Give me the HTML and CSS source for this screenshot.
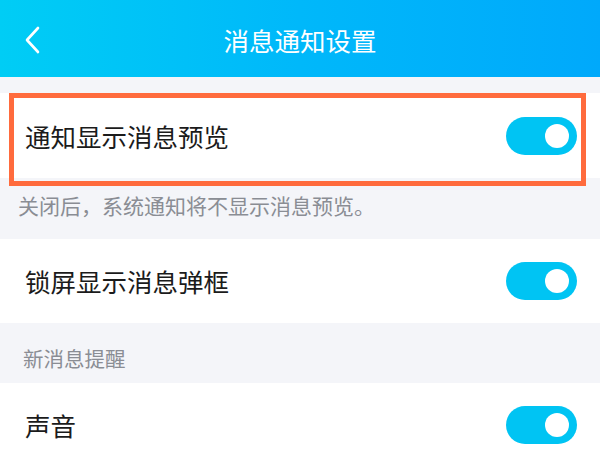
FILE: index.html
```html
<!DOCTYPE html>
<html lang="zh">
<head>
<meta charset="utf-8">
<link rel="stylesheet" href="styles.css">
</head>
<body>
<div class="page">
  <header class="topbar">
    <svg class="back" width="16" height="28" viewBox="0 0 16 28"><path d="M14 2 L3 14 L14 26" fill="none" stroke="#fff" stroke-width="2.6" stroke-linecap="round" stroke-linejoin="round"/></svg>
    <div class="title">消息通知设置</div>
  </header>
  <div class="gap-top"></div>
  <div class="row row-first">
    <span class="label">通知显示消息预览</span>
    <span class="toggle"><span class="knob"></span></span>
    <div class="highlight"></div>
  </div>
  <div class="hint">关闭后，系统通知将不显示消息预览。</div>
  <div class="row">
    <span class="label">锁屏显示消息弹框</span>
    <span class="toggle"><span class="knob"></span></span>
  </div>
  <div class="section">新消息提醒</div>
  <div class="row">
    <span class="label">声音</span>
    <span class="toggle"><span class="knob"></span></span>
  </div>
</div>
</body>
</html>
```
FILE: styles.css
```css
* { box-sizing: border-box; }
html, body { margin: 0; padding: 0; }
body {
  width: 600px;
  height: 450px;
  overflow: hidden;
  background: #f4f5f9;
  font-family: "Noto Sans CJK SC", "Noto Sans", sans-serif;
}
.page { width: 600px; }
.topbar {
  position: relative;
  height: 77px;
  background: linear-gradient(90deg, #00cdf5 0%, #00b8fa 50%, #00a9fb 100%);
  display: flex;
  align-items: center;
  justify-content: center;
}
.back {
  position: absolute;
  left: 24px;
  top: 26px;
}
.title {
  color: #fff;
  font-size: 25.5px;
  line-height: 1;
  margin-top: 2px;
}
.gap-top { height: 16px; }
.row {
  position: relative;
  height: 84px;
  background: #fff;
  display: flex;
  align-items: center;
  justify-content: space-between;
  padding: 0 23px 0 25px;
}
.row-first { height: 85px; }
.label {
  font-size: 25.5px;
  color: #1b1b1b;
  line-height: 1;
}
.toggle {
  width: 71px;
  height: 38px;
  border-radius: 19px;
  background: #00c4f3;
  display: flex;
  align-items: center;
  justify-content: flex-end;
  padding-right: 8px;
}
.knob {
  width: 24px;
  height: 24px;
  border-radius: 50%;
  background: #fff;
}
.highlight {
  position: absolute;
  left: 9px;
  top: 0;
  width: 577px;
  height: 93px;
  border: 5px solid #ff6b3d;
}
.hint {
  height: 61px;
  padding: 15px 0 0 18px;
  font-size: 21px;
  line-height: 25px;
  color: #8a8d94;
}
.section {
  height: 60px;
  padding: 23px 0 0 23px;
  font-size: 20.5px;
  line-height: 24px;
  color: #8a8d94;
}
```
